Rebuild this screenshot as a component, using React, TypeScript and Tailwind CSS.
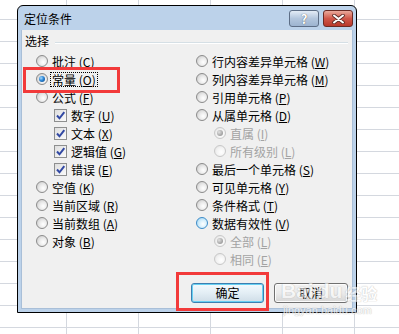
import React from 'react';

type Opt = {
  label: string;
  key: string;
  kind?: 'radio' | 'check';
  sub?: boolean;
  checked?: boolean;
  disabled?: boolean;
  hover?: boolean;
  focus?: boolean;
};

const leftOpts: Opt[] = [
  { label: '批注', key: 'C' },
  { label: '常量', key: 'O', checked: true, focus: true },
  { label: '公式', key: 'F' },
  { label: '数字', key: 'U', kind: 'check', sub: true, checked: true },
  { label: '文本', key: 'X', kind: 'check', sub: true, checked: true },
  { label: '逻辑值', key: 'G', kind: 'check', sub: true, checked: true },
  { label: '错误', key: 'E', kind: 'check', sub: true, checked: true },
  { label: '空值', key: 'K' },
  { label: '当前区域', key: 'R' },
  { label: '当前数组', key: 'A' },
  { label: '对象', key: 'B' },
];

const rightOpts: Opt[] = [
  { label: '行内容差异单元格', key: 'W' },
  { label: '列内容差异单元格', key: 'M' },
  { label: '引用单元格', key: 'P' },
  { label: '从属单元格', key: 'D' },
  { label: '直属', key: 'I', sub: true, checked: true, disabled: true },
  { label: '所有级别', key: 'L', sub: true, disabled: true },
  { label: '最后一个单元格', key: 'S' },
  { label: '可见单元格', key: 'Y' },
  { label: '条件格式', key: 'T' },
  { label: '数据有效性', key: 'V', hover: true },
  { label: '全部', key: 'L', sub: true, checked: true, disabled: true },
  { label: '相同', key: 'E', sub: true, disabled: true },
];

function Radio({ checked, disabled, hover }: { checked?: boolean; disabled?: boolean; hover?: boolean }) {
  let cls =
    'border-[#8b8b8b] bg-[radial-gradient(circle_at_62%_62%,#ffffff_0%,#ececec_40%,#c4c4c4_100%)]';
  if (disabled)
    cls = 'border-[#c8c8c8] bg-[radial-gradient(circle_at_62%_62%,#ffffff_0%,#f3f3f3_50%,#dedede_100%)]';
  if (hover)
    cls = 'border-[#3d8cc8] bg-[radial-gradient(circle_at_60%_60%,#ffffff_0%,#d6effc_45%,#8fcdf2_100%)]';
  return (
    <div className={`flex size-[12px] shrink-0 items-center justify-center rounded-full border ${cls}`}>
      {checked && !disabled && (
        <div className="size-[6px] rounded-full bg-[radial-gradient(circle_at_35%_35%,#a6dcff_0%,#2c86d6_45%,#0a3f7c_100%)]" />
      )}
      {checked && disabled && (
        <div className="size-[6px] rounded-full bg-[radial-gradient(circle_at_35%_35%,#e2e2e2_0%,#a8a8a8_60%,#8a8a8a_100%)]" />
      )}
    </div>
  );
}

function Check({ checked }: { checked?: boolean }) {
  return (
    <div className="flex size-[13px] shrink-0 items-center justify-center border border-[#8e8f8f] bg-white">
      <div className="flex size-[11px] items-center justify-center bg-gradient-to-br from-[#dedede] to-[#fbfbfb]">
        {checked && (
          <svg width="11" height="11" viewBox="0 0 11 11">
            <path d="M2 5.5 L4.5 8.3 L9.3 2.2" fill="none" stroke="#3148a3" strokeWidth="2" />
          </svg>
        )}
      </div>
    </div>
  );
}

function Row({ o }: { o: Opt }) {
  return (
    <div className={`flex h-[18px] items-center gap-[2px] ${o.sub ? 'pl-[18px]' : ''}`}>
      {o.kind === 'check' ? (
        <Check checked={o.checked} />
      ) : (
        <Radio checked={o.checked} disabled={o.disabled} hover={o.hover} />
      )}
      <span
        className={`border px-[1px] leading-[13px] ${o.focus ? 'border-dotted border-black' : 'border-transparent'} ${
          o.disabled ? 'text-[#a3a3a3]' : 'text-black'
        }`}
      >
        {o.label} (<span className="underline">{o.key}</span>)
      </span>
    </div>
  );
}

export default function App() {
  return (
    <div className="relative h-[334px] w-[399px] overflow-hidden bg-white bg-[linear-gradient(to_right,#d4d8df_1px,transparent_1px),linear-gradient(to_bottom,#d4d8df_1px,transparent_1px)] bg-[length:72px_22px] bg-[position:66px_19px] pt-[5px] pl-[17px] font-['Noto_Sans_CJK_SC',sans-serif] text-[12px]">
      {/* dialog window */}
      <div className="flex h-[308px] w-[340px] flex-col rounded-t-[6px] border border-black bg-[#bcd2ea] px-[3px] pb-[3px]">
        <div className="flex h-[24px] items-start justify-between pt-[4px]">
          <div className="pl-[3px] pt-[1px] text-[12px] leading-[16px] text-black">定位条件</div>
          <div className="flex gap-[4px]">
            <div className="flex h-[17px] w-[30px] items-center justify-center rounded-[3px] border border-[#5d6e86] bg-gradient-to-b from-[#e3ecf6] via-[#b3c6dd] to-[#9db4d0] text-[13px] leading-none font-bold text-white [text-shadow:0_0_1px_#333]">
              ?
            </div>
            <div className="flex h-[17px] w-[30px] items-center justify-center rounded-[3px] border border-[#6a2a24] bg-gradient-to-b from-[#e9a99c] via-[#d0574a] to-[#b8382b]">
              <svg width="13" height="10" viewBox="0 0 13 10">
                <path d="M2 1.5 L11 8.5 M11 1.5 L2 8.5" stroke="#5a2a26" strokeWidth="3.6" strokeLinecap="round" />
                <path d="M2 1.5 L11 8.5 M11 1.5 L2 8.5" stroke="#ffffff" strokeWidth="2" strokeLinecap="round" />
              </svg>
            </div>
          </div>
        </div>

        <div className="flex flex-1 flex-col border border-t-0 border-[#a9bfd8] bg-[#f0f0f0]">
          <div className="flex h-[22px] items-center gap-[6px] pl-[3px] pr-[4px]">
            <span className="leading-[14px]">选择</span>
            <div className="mt-[3px] h-[2px] flex-1 border-t border-b border-t-[#d5dfe5] border-b-white" />
          </div>

          <div className="flex pl-[14px]">
            <div className="flex w-[160px] flex-col">
              {leftOpts.map((o, i) => (
                <Row key={i} o={o} />
              ))}
            </div>
            <div className="flex flex-col">
              {rightOpts.map((o, i) => (
                <Row key={i} o={o} />
              ))}
            </div>
          </div>

          <div className="mt-[15px] flex justify-end gap-[10px] pr-[4px]">
            <div className="flex h-[20px] w-[73px] items-center justify-center rounded-[3px] border border-[#3c7fb1] bg-gradient-to-b from-[#f4fafd] via-[#e3eef5] to-[#cfdde7] shadow-[inset_0_0_0_1px_#68d0f2]">
              确定
            </div>
            <div className="flex h-[20px] w-[74px] items-center justify-center rounded-[3px] border border-[#707070] bg-gradient-to-b from-[#f2f2f2] via-[#ebebeb] to-[#d6d6d6] shadow-[inset_0_0_0_1px_#fcfcfc]">
              取消
            </div>
          </div>
        </div>
      </div>

      {/* annotation boxes */}
      <div className="absolute top-[67px] left-[23px] h-[26px] w-[97px] border-[3px] border-[#f23a3a]" />
      <div className="absolute top-[272px] left-[176px] h-[39px] w-[93px] border-[3px] border-[#f23a3a]" />

      {/* watermark */}
      <div className="absolute top-[279px] left-[281px] flex items-end gap-[3px] text-white opacity-60 [text-shadow:0_0_1px_#a8a8a8,0_0_1px_#a8a8a8]">
        <span className="font-['Liberation_Sans',sans-serif] text-[21px] leading-[24px] font-bold">Bai</span>
        <span className="font-['Liberation_Sans',sans-serif] text-[21px] leading-[24px] font-bold">du</span>
        <span className="pb-[1px] text-[16px] leading-[18px] font-bold">经验</span>
      </div>
      <div className="absolute top-[304px] left-[283px] font-['Liberation_Sans',sans-serif] text-[11px] leading-[12px] text-white opacity-70 [text-shadow:0_0_1px_#a8a8a8,0_0_1px_#a8a8a8]">
        jingyan.baidu.com
      </div>
    </div>
  );
}
